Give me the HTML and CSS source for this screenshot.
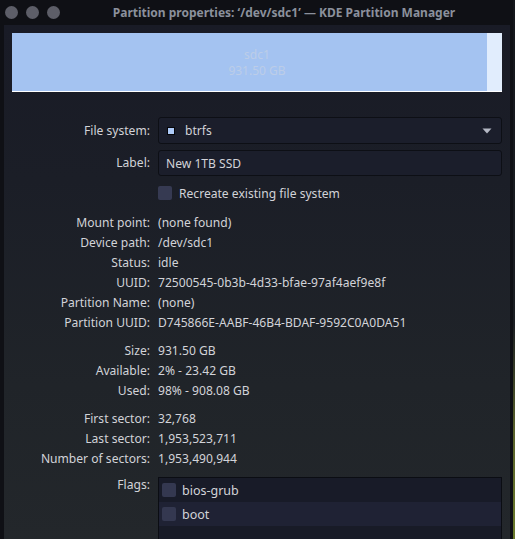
FILE: index.html
```html
<!DOCTYPE html>
<html>
<head>
<meta charset="utf-8">
<link rel="stylesheet" href="styles.css">
</head>
<body>
<div class="screen">
  <div class="window">
    <div class="titlebar">
      <div class="lights"><span class="light"></span><span class="light"></span><span class="light"></span></div>
      <div class="title">Partition properties: ‘/dev/sdc1’ — KDE Partition Manager</div>
    </div>
    <div class="content">
      <div class="pbar">
        <div class="pname">sdc1</div>
        <div class="psize">931.50 GB</div>
      </div>

      <div class="form">
        <div class="lbl">File system:</div>
        <div class="combo">
          <span class="swatch"></span>
          <span class="combo-text">btrfs</span>
          <svg class="arrow" width="10" height="6" viewBox="0 0 10 6"><path d="M0.5 0.5 L9.5 0.5 L5 5.5 Z" fill="#b4b8c4"/></svg>
        </div>

        <div class="lbl"> Label:</div>
        <div class="field">New 1TB SSD</div>

        <div class="lbl"></div>
        <div class="check-row"><span class="check"></span><span>Recreate existing file system</span></div>
      </div>

      <div class="info info-first">
        <div class="lbl">Mount point:</div><div class="val">(none found)</div>
        <div class="lbl">Device path:</div><div class="val">/dev/sdc1</div>
        <div class="lbl">Status:</div><div class="val">idle</div>
        <div class="lbl">UUID:</div><div class="val">72500545-0b3b-4d33-bfae-97af4aef9e8f</div>
        <div class="lbl">Partition Name:</div><div class="val">(none)</div>
        <div class="lbl">Partition UUID:</div><div class="val">D745866E-AABF-46B4-BDAF-9592C0A0DA51</div>
      </div>

      <div class="info">
        <div class="lbl">Size:</div><div class="val">931.50 GB</div>
        <div class="lbl">Available:</div><div class="val">2% - 23.42 GB</div>
        <div class="lbl">Used:</div><div class="val">98% - 908.08 GB</div>
      </div>

      <div class="info">
        <div class="lbl">First sector:</div><div class="val">32,768</div>
        <div class="lbl">Last sector:</div><div class="val">1,953,523,711</div>
        <div class="lbl">Number of sectors:</div><div class="val">1,953,490,944</div>
      </div>

      <div class="info flags-grid">
        <div class="lbl">Flags:</div>
        <div class="flags">
          <div class="flag flag-odd"><span class="check"></span><span>bios-grub</span></div>
          <div class="flag flag-even"><span class="check"></span><span>boot</span></div>
        </div>
      </div>
    </div>
  </div>
  <div class="desktop"></div>
</div>
</body>
</html>
```
FILE: styles.css
```css
html, body {
  margin: 0;
  padding: 0;
  background: #0f1015;
  overflow: hidden;
}
body {
  font-family: "Noto Sans", "Open Sans", sans-serif;
  font-size: 12.1px;
  color: #d2d3d8;
}
.screen {
  display: flex;
  width: 515px;
  height: 539px;
}
.window {
  width: 513px;
  height: 539px;
  display: flex;
  flex-direction: column;
  background: #0f1015;
}
.desktop {
  width: 2px;
  height: 539px;
  background: linear-gradient(to bottom, #14161b 0%, #1a1d22 60%, #58602a 80%, #6a7a2a 100%);
}
.titlebar {
  height: 25px;
  display: flex;
  align-items: center;
  flex-shrink: 0;
}
.lights {
  display: flex;
  gap: 8px;
  padding-left: 5px;
  width: 55px;
}
.light {
  width: 13px;
  height: 13px;
  border-radius: 50%;
  background: #5d5e68;
}
.title {
  flex: 1;
  text-align: center;
  font-weight: bold;
  font-size: 12px;
  color: #8b909c;
  padding-right: 5px;
}
.content {
  flex: 1;
  margin: 0 3px 0 4px;
  padding: 8px 8px 0 8px;
  background: linear-gradient(to bottom, #191b26 0%, #1b1e27 30%, #202429 70%, #23272b 100%);
  overflow: hidden;
}
.pbar {
  box-sizing: border-box;
  height: 59px;
  border-bottom: 1px solid #ffffff;
  background: linear-gradient(to right, #a4c3f1 475px, #e1edfd 475px);
  display: flex;
  flex-direction: column;
  align-items: center;
  justify-content: center;
  color: #bccde8;
  font-size: 12px;
  line-height: 16px;
  padding-top: 2px;
}
.form, .info {
  display: grid;
  grid-template-columns: 138px 1fr;
  column-gap: 8px;
  align-items: center;
}
.form {
  margin-top: 25px;
  row-gap: 6px;
}
.lbl {
  text-align: right;
  white-space: nowrap;
  line-height: 20px;
}
.val {
  line-height: 20px;
  white-space: nowrap;
}
.combo, .field {
  box-sizing: border-box;
  background: #1b1e2b;
  border: 1px solid #0d0f15;
  border-radius: 3px;
  display: flex;
  align-items: center;
}
.combo {
  height: 27px;
  padding: 0 8px;
}
.field {
  height: 26px;
  padding: 0 7px;
}
.swatch {
  width: 6px;
  height: 6px;
  border: 1px solid #05060a;
  background: #aecbf8;
  margin-right: 10px;
}
.combo-text {
  flex: 1;
}
.arrow {
  margin-right: 1px;
}
.check-row {
  display: flex;
  align-items: center;
  gap: 7px;
  height: 20px;
  margin-top: 1px;
}
.check {
  width: 14px;
  height: 14px;
  border-radius: 2px;
  background: #363a52;
  flex-shrink: 0;
}
.info {
  margin-top: 8px;
}
.info-first {
  margin-top: 10px;
}
.flags-grid {
  margin-top: 8px;
  align-items: start;
}
.flags-grid .lbl {
  margin-top: -2px;
}
.flags {
  background: #181b27;
  border: 1px solid #0b0d13;
  border-bottom: none;
  height: 70px;
}
.flag {
  height: 24px;
  display: flex;
  align-items: center;
  gap: 6px;
  padding-left: 3px;
  font-size: 12.5px;
}
.flag-odd {
  background: #181b28;
  height: 24px;
}
.flag-even {
  background: #1f2234;
}
.flag .check {
  background: #343850;
}
```
